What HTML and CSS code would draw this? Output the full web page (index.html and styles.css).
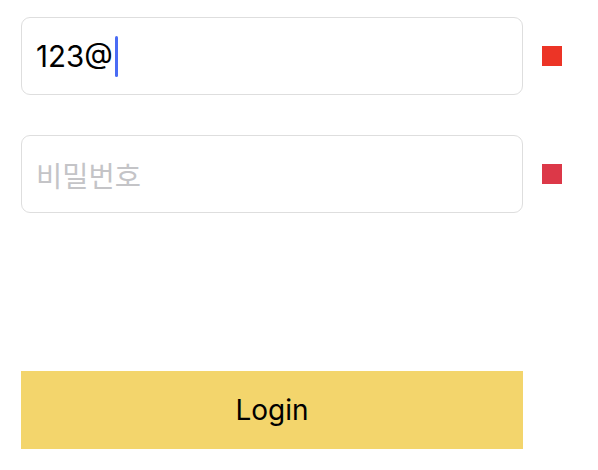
FILE: index.html
```html
<!DOCTYPE html>
<html>
<head>
<meta charset="utf-8">
<link rel="stylesheet" href="styles.css">
</head>
<body>
<div class="form">
  <div class="row">
    <div class="field"><span class="value">123@</span><span class="caret"></span></div>
    <div class="status status-red"></div>
  </div>
  <div class="row">
    <div class="field"><span class="placeholder">비밀번호</span></div>
    <div class="status status-crimson"></div>
  </div>
  <div class="actions">
    <div class="button">Login</div>
  </div>
</div>
</body>
</html>
```
FILE: styles.css
```css
html, body {
  margin: 0;
  background: #ffffff;
}
body {
  font-family: Inter, "Noto Sans CJK KR", "Liberation Sans", sans-serif;
}
.form {
  padding: 17px 21px;
  display: flex;
  flex-direction: column;
  gap: 40px;
}
.row {
  display: flex;
  align-items: center;
  gap: 19px;
}
.field {
  box-sizing: border-box;
  width: 502px;
  height: 78px;
  border: 1px solid #dedede;
  border-radius: 9px;
  display: flex;
  align-items: center;
  padding-left: 14px;
}
.value {
  font-size: 29.5px;
  color: #000;
}
.caret {
  width: 3px;
  height: 41px;
  background: #4a6cf4;
  border-radius: 1.5px;
  margin-left: 2px;
}
.placeholder {
  font-size: 28.5px;
  color: #c4c4c7;
}
.status {
  width: 20px;
  height: 20px;
}
.status-red { background: #ec3426; }
.status-crimson { background: #dc3848; }
.actions {
  margin-top: 118px;
}
.button {
  width: 502px;
  height: 78px;
  background: #f3d56c;
  display: flex;
  align-items: center;
  justify-content: center;
  font-size: 28px;
  color: #000;
}
```
